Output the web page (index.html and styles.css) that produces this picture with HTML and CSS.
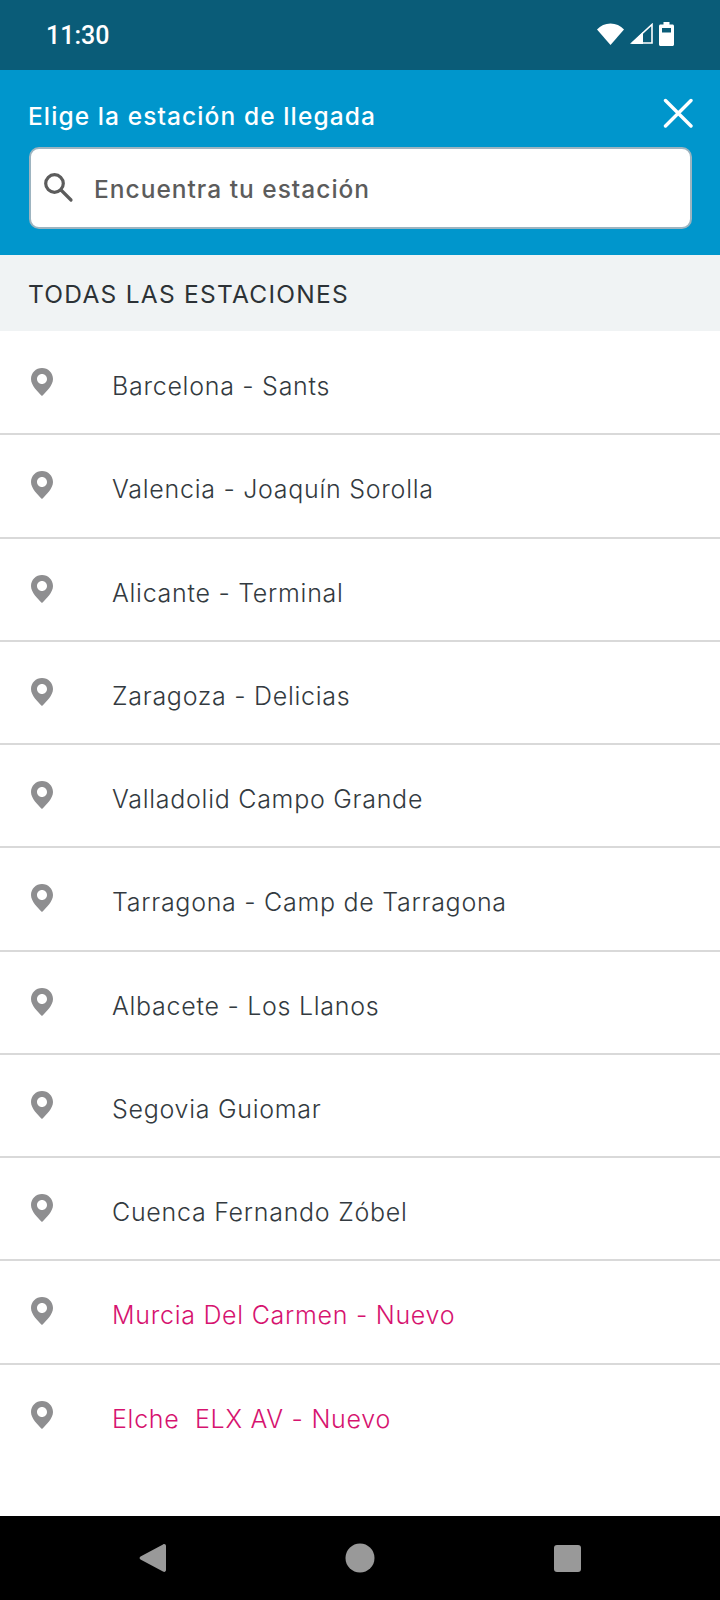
FILE: index.html
```html
<!DOCTYPE html>
<html lang="es">
<head>
  <meta charset="UTF-8" />
  <title>Elige la estación de llegada</title>
  <link rel="stylesheet" href="styles.css">
</head>
<body>
  <div class="screen">
    <!-- Status bar -->
    <div class="status-bar">
      <span class="status-time">11:30</span>
      <div class="status-icons">
        <svg class="icon-wifi" width="27" height="22" viewBox="0 0 27 22"><path d="M0 6.5C3.5 2.6 8.2 0.5 13.5 0.5S23.500 2.6 27 6.500L13.500 22Z" fill="#fff"/></svg>
        <svg class="icon-signal" width="23" height="21" viewBox="0 0 23 21"><path d="M22 1.500V20H2Z" fill="none" stroke="#fff" stroke-width="1.600"/><path d="M1 21L13 9V21Z" fill="#fff"/></svg>
        <svg class="icon-battery" width="15" height="24" viewBox="0 0 15 24"><path d="M4.500 0H10.500V2.500H13.500C14.300 2.500 15 3.200 15 4V22.500C15 23.300 14.300 24 13.500 24H1.500C0.700 24 0 23.300 0 22.500V4C0 3.200 0.700 2.500 1.500 2.500H4.500ZM3 6V10.500H12V6Z" fill="#fff" fill-rule="evenodd"/></svg>
      </div>
    </div>

    <!-- Header with search -->
    <div class="header">
      <div class="header-top">
        <h1 class="header-title">Elige la estación de llegada</h1>
        <svg class="icon-close" width="30" height="30" viewBox="0 0 30 30"><path d="M2.500 2.500L28 28M28 2.500L2.500 28" stroke="#fff" stroke-width="3.400" stroke-linecap="round"/></svg>
      </div>
      <div class="search-box">
        <svg class="icon-search" width="30" height="30" viewBox="0 0 30 30"><circle cx="10.500" cy="10.500" r="8.800" fill="none" stroke="#5c5c5c" stroke-width="3.200"/><path d="M17 17L27 27" stroke="#5c5c5c" stroke-width="3.200" stroke-linecap="round"/></svg>
        <span class="search-text">Encuentra tu estación</span>
      </div>
    </div>

    <div class="section-title">TODAS LAS ESTACIONES</div>

    <!-- Stations get filled in by the script -->
    <div class="station-list" id="stationList"></div>

    <!-- Nav bar -->
    <div class="nav-bar">
      <svg width="27" height="30" viewBox="0 0 27 30"><path d="M24 1.500C25.500 0.500 27 1.500 27 3V27C27 28.500 25.500 29.500 24 28.500L1.500 16.500C0.300 15.800 0.300 14.200 1.500 13.500Z" fill="#999"/></svg>
      <svg width="30" height="30" viewBox="0 0 30 30"><circle cx="15" cy="15" r="14.500" fill="#999"/></svg>
      <svg width="27" height="27" viewBox="0 0 27 27"><rect width="27" height="27" rx="3" fill="#999"/></svg>
    </div>
  </div>

  <script>
    const stations = [
      { name: "Barcelona - Sants" },
      { name: "Valencia - Joaquín Sorolla" },
      { name: "Alicante - Terminal" },
      { name: "Zaragoza - Delicias" },
      { name: "Valladolid Campo Grande" },
      { name: "Tarragona - Camp de Tarragona" },
      { name: "Albacete - Los Llanos" },
      { name: "Segovia Guiomar" },
      { name: "Cuenca Fernando Zóbel" },
      { name: "Murcia Del Carmen - Nuevo", isNew: true },
      { name: "Elche  ELX AV - Nuevo", isNew: true }
    ];

    const list = document.getElementById("stationList");

    stations.forEach(st => {
      const row = document.createElement("div");
      row.className = "station-row";
      row.innerHTML = `<svg class="icon-pin" width="22" height="28" viewBox="0 0 22 28"><path fill-rule="evenodd" d="M11 0C17.100 0 22 4.900 22 11C22 17.500 15 24 11 28C7 24 0 17.500 0 11C0 4.900 4.900 0 11 0ZM11 6C8.200 6 6 8.200 6 11S8.200 16 11 16S16 13.800 16 11S13.800 6 11 6Z" fill="#8e8e90"/></svg><span class="station-name${st.isNew ? " new" : ""}">${st.name}</span>`;
      list.appendChild(row);
    });
  </script>
</body>
</html>
```

FILE: styles.css
```css
* {
  box-sizing: border-box;
}

body {
  margin: 0;
  font-family: Inter, Lato, sans-serif;
  background: #fff;
}

.screen {
  width: 720px;
  height: 1600px;
  display: flex;
  flex-direction: column;
}

.status-bar {
  height: 70px;
  flex: none;
  background: #0a5c78;
  display: flex;
  align-items: center;
  justify-content: space-between;
  padding: 0 46px;
  color: #fff;
}

.status-time {
  font-family: Roboto, sans-serif;
  font-size: 25px;
  font-weight: 500;
}

.status-icons {
  display: flex;
  align-items: center;
  gap: 6px;
  margin-bottom: 3px;
}

.header {
  height: 185px;
  flex: none;
  background: #0096cc;
  padding: 28px 28px 0 29px;
}

.header-top {
  display: flex;
  align-items: flex-start;
  justify-content: space-between;
  height: 32px;
  margin-bottom: 17px;
}

.header-title {
  margin: 3px 0 0 -1px;
  font-size: 24.500px;
  font-weight: 500;
  color: #fff;
  letter-spacing: 1.100px;
}

.icon-close {
  margin-right: -1px;
}

.search-box {
  height: 82px;
  background: #fff;
  border: 2px solid #9db4c0;
  border-radius: 10px;
  display: flex;
  align-items: center;
  padding-left: 13px;
}

.search-text {
  margin-left: 20px;
  padding-top: 2px;
  font-size: 24.500px;
  font-weight: 500;
  color: #5c5c5c;
  letter-spacing: 1px;
}

.section-title {
  height: 76px;
  flex: none;
  background: #f0f3f4;
  display: flex;
  align-items: center;
  padding: 2px 0 0 28px;
  font-size: 24.500px;
  font-weight: 400;
  color: #2c3236;
  letter-spacing: 1.250px;
}

.station-list {
  flex: 1;
  padding-top: 1px;
}

.station-row {
  height: 103.250px;
  border-bottom: 2px solid #d9d9d9;
  display: flex;
  align-items: flex-start;
  padding-left: 31px;
  padding-top: 36px;
}

.station-row:last-child {
  border-bottom: none;
}

.icon-pin {
  flex: none;
}

.station-name {
  margin-left: 59px;
  margin-top: 4px;
  font-size: 25px;
  line-height: 28px;
  font-weight: 300;
  color: #333a40;
  letter-spacing: 0.720px;
  white-space: pre;
}

.station-name.new {
  color: #d6136f;
}

.nav-bar {
  height: 84px;
  flex: none;
  background: #000;
  display: flex;
  align-items: center;
  justify-content: space-between;
  padding: 0 139px;
}
```
